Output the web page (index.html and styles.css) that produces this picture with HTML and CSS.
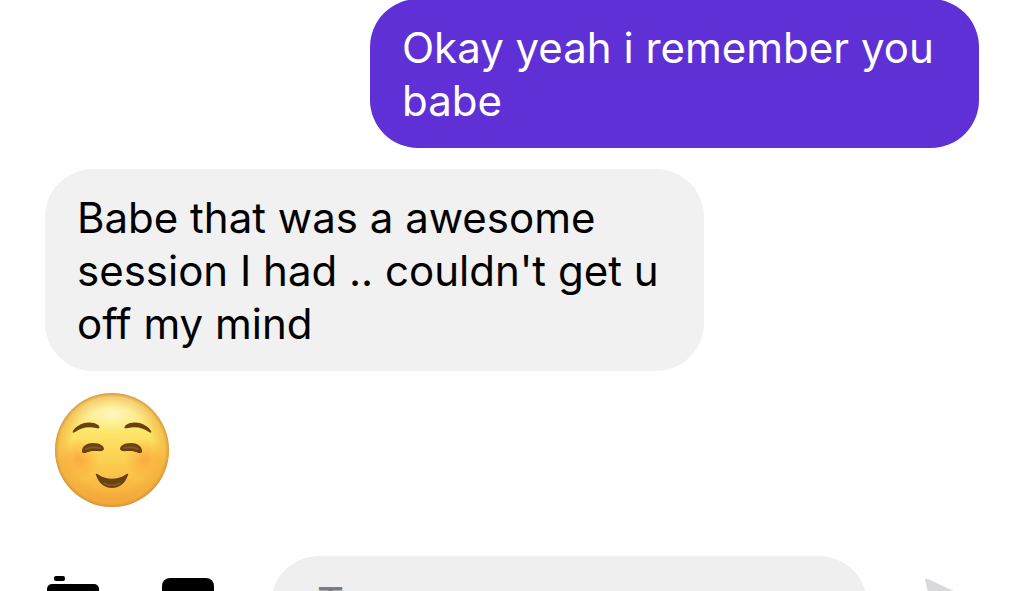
FILE: index.html
```html
<!DOCTYPE html>
<html lang="en">
<head>
    <meta charset="UTF-8">
    <meta name="viewport" content="width=device-width, initial-scale=1.0">
    <title>Chat</title>
    <link rel="stylesheet" href="styles.css">
</head>
<body>
    <main class="thread">
        <p class="bubble sent">Okay yeah i remember you babe</p>
        <p class="bubble received">Babe that was a awesome session I had .. couldn't get u off my mind</p>

        <svg class="emoji" viewBox="0 0 116 116" role="img" aria-label="Smiling face">
            <defs>
                <linearGradient id="face" x1="0" y1="0" x2="0" y2="1">
                    <stop offset="0" stop-color="#fdf0a0"/>
                    <stop offset="0.35" stop-color="#fce568"/>
                    <stop offset="0.6" stop-color="#fccf50"/>
                    <stop offset="1" stop-color="#f6a638"/>
                </linearGradient>
                <radialGradient id="edge">
                    <stop offset="0.72" stop-color="#eb9a2c" stop-opacity="0"/>
                    <stop offset="0.93" stop-color="#f0a83a" stop-opacity="0.55"/>
                    <stop offset="1" stop-color="#d2903c" stop-opacity="0.9"/>
                </radialGradient>
                <radialGradient id="shine">
                    <stop offset="0" stop-color="#fffce0" stop-opacity="0.7"/>
                    <stop offset="1" stop-color="#fff6a0" stop-opacity="0"/>
                </radialGradient>
                <radialGradient id="blush">
                    <stop offset="0" stop-color="#fa8530" stop-opacity="0.5"/>
                    <stop offset="1" stop-color="#fa8c2c" stop-opacity="0"/>
                </radialGradient>
            </defs>
            <circle cx="58" cy="58" r="57" fill="url(#face)"/>
            <circle cx="58" cy="58" r="57" fill="url(#edge)"/>
            <ellipse cx="58" cy="23" rx="42" ry="20" fill="url(#shine)"/>
            <circle cx="25" cy="67" r="21" fill="url(#blush)"/>
            <circle cx="91" cy="67" r="21" fill="url(#blush)"/>
            <g fill="#69400f">
                <path d="M19 39C24 31 36 28 44 33C47 36 45 37 42 36C34 34 27 36 21 40C19 41 18 41 19 39Z"/>
                <path d="M97 39C92 31 80 28 72 33C69 36 71 37 74 36C82 34 89 36 95 40C97 41 98 41 97 39Z"/>
                <path d="M28 59C28 54 33 51 39 51C46 51 50 54 50 57C49 60 46 59 40 59C35 59 33 61 30 61C28 61 28 60 28 59Z"/>
                <path d="M88 59C88 54 83 51 77 51C70 51 66 54 66 57C67 60 70 59 76 59C81 59 83 61 86 61C88 61 88 60 88 59Z"/>
                <path d="M42 83C41 81 43 82 45 83C53 88 63 88 71 83C73 82 75 81 74 83C72 90 66 96 58 96C50 96 44 90 42 83Z"/>
            </g>
            <g fill="none" stroke="#85591a" stroke-width="2" stroke-linecap="round">
                <path d="M32 57C36 55 41 55 46 56"/>
                <path d="M84 57C80 55 75 55 70 56"/>
                <path d="M50 91C55 94 61 94 66 91"/>
            </g>
        </svg>
    </main>

    <form class="composer">
        <button class="icon-button" type="button" aria-label="Camera">
            <svg viewBox="0 0 56 56">
                <rect x="7" y="0" width="11" height="5" rx="2"/>
                <rect x="0" y="8" width="52" height="42" rx="5"/>
                <circle cx="26" cy="29" r="11" fill="#fff"/>
            </svg>
        </button>
        <button class="icon-button" type="button" aria-label="Photo">
            <svg viewBox="0 0 56 56">
                <rect x="3" y="2" width="52" height="52" rx="8"/>
                <path d="M10 44L23 28L32 38L38 32L48 44Z" fill="#fff"/>
            </svg>
        </button>
        <input class="message-input" type="text" placeholder="Type a message" aria-label="Type a message">
        <button class="icon-button send" type="submit" aria-label="Send">
            <svg viewBox="0 0 56 56">
                <path d="M2 4Q2 2 5 3L54 26Q57 28 54 30L5 53Q2 54 2 52L8 28Z"/>
            </svg>
        </button>
    </form>
</body>
</html>
```

FILE: styles.css
```css
* {
    box-sizing: border-box;
}
body {
    height: 100vh;
    margin: 0;
    overflow: hidden;
    background-color: #fff;
    font-family: Inter, "Liberation Sans", sans-serif;
    font-size: 42px;
    line-height: 53px;
}
.thread {
    display: flex;
    flex-direction: column;
    margin-top: -1px;
    padding: 0 45px;
}
.bubble {
    margin: 0 0 21px;
    padding: 22px 32px 21px;
    border-radius: 48px;
}
.sent {
    align-self: flex-end;
    max-width: 609px;
    background-color: #5e30d5;
    color: #fff;
}
.received {
    align-self: flex-start;
    max-width: 659px;
    background-color: #f1f1f1;
    color: #000;
}
.emoji {
    display: block;
    width: 116px;
    height: 116px;
    margin: 0 9px 48px;
}
.composer {
    display: flex;
    align-items: center;
    gap: 56px;
    padding: 0 45px 24px 47px;
}
.icon-button {
    flex: none;
    padding: 0;
    border: 0;
    background: none;
    color: #000;
}
.icon-button svg {
    display: block;
    width: 56px;
    height: 56px;
    fill: currentColor;
}
.send {
    color: #d9d9dc;
}
.message-input {
    flex: 1;
    min-width: 0;
    height: 96px;
    padding: 0 46px 4px;
    border: 0;
    border-radius: 48px;
    background-color: #efefef;
    font: inherit;
}
.message-input::placeholder {
    color: #7b7b80;
}
```
